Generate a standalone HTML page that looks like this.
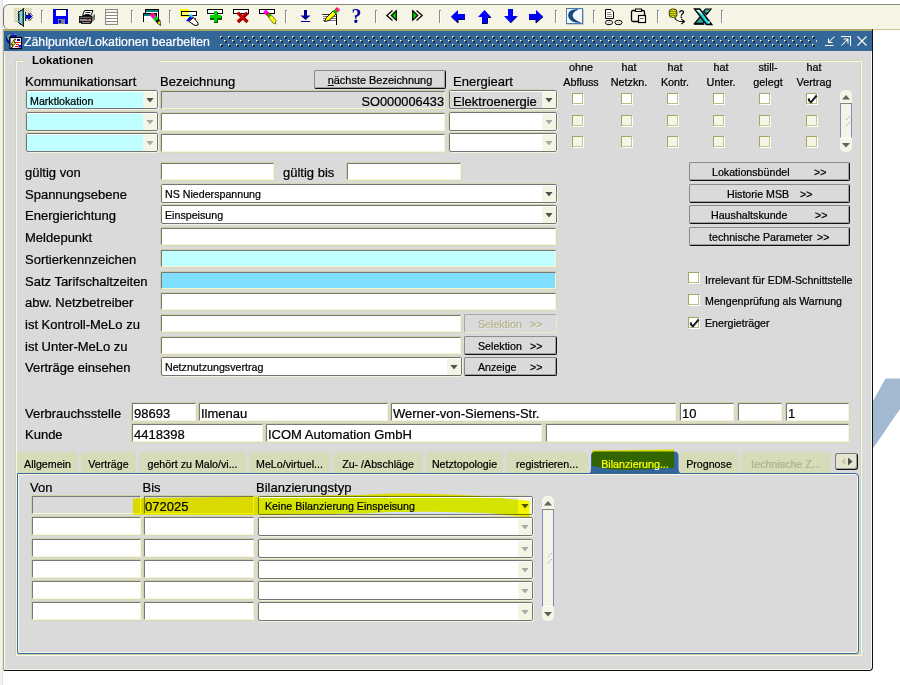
<!DOCTYPE html>
<html lang="de"><head><meta charset="utf-8"><title>Zählpunkte/Lokationen bearbeiten</title>
<style>
html,body{margin:0;padding:0;}
body{width:900px;height:685px;position:relative;overflow:hidden;background:#fff;font-family:"Liberation Sans",Arial,sans-serif;color:#000;-webkit-text-stroke:0.22px currentColor;}
.a{position:absolute;box-sizing:border-box;}
.l{position:absolute;white-space:nowrap;font-size:13px;line-height:16px;color:#000;}
.s{position:absolute;white-space:nowrap;font-size:10.67px;line-height:13px;color:#000;}
.f{position:absolute;box-sizing:border-box;border:1px solid;border-color:#cfcfa6 #dadab2 #dadab2 #cfcfa6;border-radius:2px;background:#fff;}
.f:before{content:"";position:absolute;left:0;top:0;right:0;bottom:0;border:1px solid;border-color:#787878 #f5f5de #f5f5de #787878;border-radius:1px;}
.f span{position:absolute;white-space:nowrap;}
.c{position:absolute;box-sizing:border-box;border:1px solid #747474;border-radius:2px;background:#fff;box-shadow:-1px -1px 0 #d6d6b2, 1px 1px 0 rgba(246,246,226,.85);}
.c:before{content:"";position:absolute;left:0;top:0;right:0;height:1px;background:#fff;z-index:2}
.c i{position:absolute;right:0;top:0;bottom:0;width:14px;background:#f5f5e6;border-radius:0 1px 1px 0;}
.c i:after{content:"";position:absolute;left:3px;top:50%;margin-top:-2px;width:8px;height:5px;background:#505050;clip-path:polygon(0 0,100% 0,50% 100%);}
.c.d i:after{background:#a8a8a8;}
.c span{position:absolute;white-space:nowrap;}
.b{position:absolute;box-sizing:border-box;border:1px solid;border-color:#8a8a8a #111 #111 #8a8a8a;border-radius:2px;background:#dadada;text-align:center;font-size:10.67px;white-space:pre;box-shadow:inset -1px -1px 0 rgba(0,0,0,.28);}
.b.d{border-color:#a8a8a0 #e9e9cc #e9e9cc #a8a8a0;color:#b4b492;box-shadow:none;text-shadow:1px 1px 0 #ecece0;}
.b span{position:absolute;top:0;}
.k{position:absolute;box-sizing:border-box;width:11px;height:11px;border:1px solid;border-color:#a5a568 #bcbc84 #bcbc84 #a5a568;background:#fff;box-shadow:1px 1px 0 #fff;}
.k.d{background:#f5f5e6;border-color:#a5a568 #c6c68e #c6c68e #a5a568;}
.t{position:absolute;box-sizing:border-box;top:452px;height:21px;background:#d6dbb8;border-radius:5px 5px 0 0;font-size:10.67px;line-height:25px;text-align:center;white-space:nowrap;}
</style></head>
<body>
<div class="a" style="left:0;top:0;width:3px;height:685px;background:#f1f1f1;border-right:1px solid #e3e3e3"></div>
<div class="a" style="left:3px;top:4px;width:897px;height:26px;background:#f6f5e5;border-top:1px solid #858580;border-left:1px solid #77776f;border-bottom:1px solid #c9c7a0;border-radius:6px 0 0 6px;"></div>
<svg class="a" style="left:0;top:0" width="900" height="30" viewBox="0 0 900 30">
<defs>
<pattern id="dth" width="2" height="2" patternUnits="userSpaceOnUse"><rect width="2" height="2" fill="#f6f5e5"/><rect width="1" height="1" fill="#c9c79a"/><rect x="1" y="1" width="1" height="1" fill="#c9c79a"/></pattern>
<g id="sep"><rect x="0" y="0" width="1" height="13" fill="#8c8c8c"/><rect x="1" y="0" width="1" height="1" fill="#8c8c8c"/><rect x="1" y="1" width="1" height="12" fill="#fff"/></g>
</defs>
<g shape-rendering="crispEdges">
<!-- exit -->
<rect x="14" y="8" width="18" height="13" fill="url(#dth)"/>
<polygon points="18.500,12 23.500,9 23.500,26 18.500,22.500" fill="#2f9292" stroke="#223" stroke-width="1"/>
<polygon points="19.500,12.500 21.500,11.300 21.500,23.800 19.500,22" fill="#7fd0d0"/>
<rect x="15" y="21" width="4" height="1" fill="#b9b48a"/>
<rect x="21" y="17" width="1" height="1" fill="#ff0"/>
<rect x="24" y="12" width="1" height="9" fill="#bff"/>
<rect x="25" y="12" width="1" height="9" fill="#334"/>
<polygon points="26,15 28.500,15 28.500,13 32.500,16.500 28.500,20 28.500,18 26,18" fill="#0000e0" stroke="#001060" stroke-width="0.6"/>
<!-- save -->
<rect x="53" y="9" width="15" height="15" fill="#0000ff"/>
<rect x="56" y="10" width="10" height="6" fill="#fff"/>
<rect x="57" y="9" width="11" height="1" fill="#000" opacity=".8"/>
<rect x="54" y="11" width="1" height="1" fill="#000"/>
<rect x="58" y="19" width="7" height="5" fill="#808080"/>
<rect x="59" y="20" width="2" height="3" fill="#0000ff"/>
<!-- print -->
</g>
<polygon points="82.500,15.500 84.500,10.500 93,10.500 91,15.500" fill="#fff" stroke="#000" stroke-width="1"/>
<path d="M85.500 12.500 H90.500 M84.700 14.500 H89.700" stroke="#222" stroke-width="1"/>
<polygon points="91.500,16.500 95,13.800 95,19.500 91.500,22.500" fill="#5c5c5c"/>
<path d="M92.500 16.500 L94.500 15 M92.500 19 L94.500 17.500 M92.500 21 L94.500 19.500" stroke="#cfcfcf" stroke-width=".6"/>
<g shape-rendering="crispEdges">
<rect x="79" y="16" width="13" height="7" fill="#1c1c1c"/>
<rect x="80" y="17" width="11" height="1" fill="#6a6a6a"/>
<rect x="80" y="19" width="11" height="2" fill="#8c8c8c"/>
<rect x="87" y="19" width="2" height="1" fill="#ff0000"/>
<rect x="81" y="23" width="10" height="1" fill="#1c1c1c"/>
<rect x="82" y="22" width="8" height="1" fill="#8a8a8a"/>
<!-- list disabled -->
<rect x="105.5" y="9.5" width="12" height="15" fill="#fff" stroke="#8a8a8a"/>
<rect x="106" y="12" width="11" height="1" fill="#8a8a8a"/><rect x="106" y="15" width="11" height="1" fill="#8a8a8a"/><rect x="106" y="18" width="11" height="1" fill="#8a8a8a"/><rect x="106" y="21" width="11" height="1" fill="#8a8a8a"/>
<rect x="106" y="10" width="11" height="2" fill="#f6f5e5"/><rect x="106" y="22" width="11" height="2" fill="#f6f5e5"/>
<!-- window+crayon -->
<rect x="145.500" y="9.5" width="13" height="9" fill="#fff" stroke="#000"/>
<rect x="146" y="10" width="12" height="2" fill="#008080"/>
<rect x="143.500" y="13.500" width="13" height="8" fill="#fff" stroke="#000"/>
<rect x="144" y="14" width="12" height="2" fill="#008080"/>
<rect x="143" y="21" width="14" height="1" fill="#f6f5e5"/>
<rect x="143" y="21" width="1" height="1" fill="#000"/>
</g>
<g>
<polygon points="149.500,15 152.500,12.500 156,16 153,19" fill="#ff00ff"/>
<polygon points="151,14.500 153.500,13 155,15 152.500,17" fill="#ff2020"/>
<polygon points="153,19 156,16 158.500,18.500 155.500,21.500" fill="#00cc00"/>
<polygon points="155.500,21.500 158.500,18.500 160,20 157,23" fill="#111"/>
<polygon points="157,23 160,20 160.500,25.500" fill="#ffff00" stroke="#000" stroke-width=".7"/>
</g>
<g shape-rendering="crispEdges">
<!-- flashlight -->
<rect x="180" y="9" width="9" height="8" fill="#ffff00"/>
<rect x="181.500" y="11.500" width="15" height="4" fill="#fff" stroke="#000"/>
<rect x="182" y="12" width="7" height="3" fill="#ffff66"/>
</g>
<polygon points="186,21 191,15 193.500,17.500 188.500,21.500" fill="#0000dd"/>
<polygon points="189,15.500 191,14 193.500,16.500 192,18" fill="#00ddff"/>
<polygon points="189,21.500 193.500,17.500 198,23 198,25 195,25.500" fill="#fff" stroke="#000" stroke-width="1"/>
<rect x="195" y="18" width="1" height="2" fill="#e00"/>
<g shape-rendering="crispEdges">
<!-- insert -->
<rect x="207.500" y="9.500" width="15" height="4" fill="#fff" stroke="#000"/>
<rect x="214" y="12" width="4" height="11" fill="#006000"/><rect x="210" y="16" width="12" height="4" fill="#006000"/>
<rect x="214" y="11" width="3" height="11" fill="#00d000"/><rect x="210" y="15" width="11" height="3" fill="#00d000"/>
<!-- delete -->
<rect x="233.500" y="9.500" width="15" height="4" fill="#fff" stroke="#000"/>
</g>
<path d="M238 13 L247.500 22 M247.500 13 L238 22" stroke="#700" stroke-width="3.200" fill="none"/>
<path d="M237.500 12.500 L247 21.500 M247 12.500 L237.500 21.500" stroke="#d00000" stroke-width="2.400" fill="none"/>
<!-- clear -->
<rect x="259.500" y="9.500" width="15" height="4" fill="#fff" stroke="#000" shape-rendering="crispEdges"/>
<polygon points="263,12 266,9.500 268.500,12 265.500,14.500" fill="#ff00ff"/>
<polygon points="265.500,14.500 268.500,12 270,13.500 267,16" fill="#e00"/>
<polygon points="267,16 270,13.500 271.500,15 268.500,17.500" fill="#00c000"/>
<polygon points="268.500,17.500 271.500,15 276,20.500 275.500,24 273,23" fill="#ffff00" stroke="#222" stroke-width=".6"/>
<!-- down arrow -->
<g fill="#000099" shape-rendering="crispEdges"><rect x="304" y="10" width="3" height="6"/><rect x="301" y="21" width="9" height="1.300"/></g>
<polygon points="300.500,15.500 310.500,15.500 305.500,20" fill="#000099"/>
<!-- edit -->
<rect x="322" y="14" width="15" height="10" fill="#fff"/>
<g fill="#333" shape-rendering="crispEdges"><rect x="322" y="14" width="14" height="1"/><rect x="323" y="16" width="13" height="1" fill="#777"/><rect x="323" y="18" width="13" height="1" fill="#777"/><rect x="323" y="20" width="13" height="1" fill="#777"/><rect x="336" y="14" width="1" height="11" fill="#000"/></g>
<polygon points="324.500,21.500 326,18 333,11 336,14 329,20.500" fill="#ffff00" stroke="#000" stroke-width=".9"/>
<polygon points="333,11 335,9 338,12 336,14" fill="#00c000"/>
<polygon points="334.800,9.200 337,7 340,10 337.800,12.200" fill="#ff2020"/>
<polygon points="337.300,9 338.800,7.800 340.300,10 339,11.300" fill="#ff40ff"/>
<!-- help -->
<text x="351.500" y="23.300" font-family="Liberation Serif,serif" font-weight="bold" font-size="20" fill="#000099" style="-webkit-text-stroke:0">?</text>
<!-- << >> -->
<path d="M392.500 10.500 L386.800 15.500 L392.500 20.500" fill="none" stroke="#000" stroke-width="1.200"/>
<polygon points="396.300,10.800 391.300,15.500 396.300,20.200" fill="#00dd00" stroke="#000" stroke-width="1.200"/>
<path d="M416.500 10.500 L422.200 15.500 L416.500 20.500" fill="none" stroke="#000" stroke-width="1.200"/>
<polygon points="412.700,10.800 417.700,15.500 412.700,20.200" fill="#00dd00" stroke="#000" stroke-width="1.200"/>
<!-- blue arrows -->
<polygon points="451,16.500 458,10 458,14 465,14 465,19 458,19 458,23" fill="#0000ff"/>
<path d="M451.500 17 L458 23 L458 19.500 L465 19.500" fill="none" stroke="#000050" stroke-width="1"/>
<polygon points="484.500,10 491,17 487,17 487,23.500 482,23.500 482,17 478,17" fill="#0000ff"/>
<path d="M491 17.500 L487.500 17.500 L487.500 23.500 L482 23.500" fill="none" stroke="#000050" stroke-width="1"/>
<polygon points="508,9 513,9 513,16 517.500,16 510.500,23 504,16 508,16" fill="#0000ff"/>
<path d="M517 16.500 L510.500 23 " fill="none" stroke="#000050" stroke-width="1"/>
<polygon points="529,14 536,14 536,10 543,16.500 536,23 536,19 529,19" fill="#0000ff"/>
<path d="M529 19.500 L536 19.500 L536 23 L543 16.800" fill="none" stroke="#000050" stroke-width="1"/>
<!-- moon -->
<rect x="567" y="9" width="17" height="16" fill="#c8c8c8"/>
<rect x="566.500" y="8.500" width="16" height="15" fill="#f4f8fc" stroke="#4a7ab0" stroke-width="1"/>
<path d="M579 9.500 C571 12 569.500 19 581.500 22.500 C572 24.500 565 17 569.500 11.500 C572 9 576 8.800 579 9.500 Z" fill="#174a7c"/>
<!-- doc+glasses -->
<polygon points="605.500,9.500 611,9.500 613.500,12 613.500,18.500 605.500,18.500" fill="#fff" stroke="#000"/>
<g fill="#888" shape-rendering="crispEdges"><rect x="607" y="12" width="4" height="1"/><rect x="607" y="14" width="5" height="1"/><rect x="607" y="16" width="5" height="1"/></g>
<ellipse cx="609" cy="22.500" rx="3.600" ry="2.200" fill="none" stroke="#000"/><ellipse cx="609" cy="22.500" rx="1.200" ry=".6" fill="#999"/>
<ellipse cx="618.500" cy="22.500" rx="3.600" ry="2.200" fill="none" stroke="#000"/><ellipse cx="618.500" cy="22.500" rx="1.200" ry=".6" fill="#999"/>
<!-- clipboard -->
<rect x="631.500" y="10.500" width="13" height="11" rx="1.500" fill="#f6f5e5" stroke="#000" stroke-width="1.300"/>
<rect x="635.500" y="9" width="6" height="2.500" fill="#f6f5e5" stroke="#000"/>
<rect x="638.500" y="15.500" width="7" height="7" fill="#fff" stroke="#000" stroke-width="1.200"/>
<rect x="640" y="18" width="4" height="1" fill="#777"/>
<!-- db query -->
<rect x="669.300" y="9" width="7.600" height="8.400" rx="3.500" ry="2.200" fill="#ffff00" stroke="#111" stroke-width=".9"/>
<path d="M669.800 11.200 H676.500 M669.800 13.200 H676.500 M669.800 15.200 H676.500" stroke="#3a3a00" stroke-width=".8"/>
<text x="678.600" y="17.500" font-family="Liberation Sans,sans-serif" font-weight="bold" font-size="10" fill="#000" style="-webkit-text-stroke:0">?</text>
<path d="M674.800 17.500 C675.500 20.800 678.500 21.800 684 21.500 M681.300 18.800 L684.500 21.500 L681.300 24.200" fill="none" stroke="#000" stroke-width="1.100"/>
<!-- excel -->
<path d="M700.500 16.500 L704 21 L703 23.500 L694.500 23.500 Z" fill="#2aa5a5" stroke="#000" stroke-width="1.300"/>
<rect x="694" y="23.500" width="10.500" height="1.300" fill="#000"/>
<path d="M705.500 9 L711 9 L706.500 14.500 L703.500 11.500 Z" fill="#2aa5a5" stroke="#000" stroke-width="1.200"/>
<path d="M707 12 L709.500 9.800" stroke="#6c6" stroke-width="1"/>
<path d="M694.500 9 L699.800 9 L711.800 24.500 L706.500 24.500 Z" fill="#19d9d9" stroke="#000" stroke-width="1.400"/>
<path d="M696 9.900 L699.300 9.900 L703.500 15.300 Z" fill="#fff"/>
<rect x="708.300" y="21.300" width="1.500" height="1.500" fill="#fff"/>
<!-- separators -->
<use href="#sep" x="41" y="10"/><use href="#sep" x="131" y="10"/><use href="#sep" x="169" y="10"/><use href="#sep" x="285" y="10"/><use href="#sep" x="375" y="10"/><use href="#sep" x="439" y="10"/><use href="#sep" x="555" y="10"/><use href="#sep" x="593" y="10"/><use href="#sep" x="657" y="10"/><use href="#sep" x="721" y="10"/>
</svg>

<div class="a" style="left:3px;top:29px;width:870px;height:642px;background:#dadada;border:1px solid;border-color:#a5a567 #111 #111 #a9a976;border-radius:0 0 4px 2px;box-shadow:inset -1px -1px 0 #f7f7e2"></div>
<div class="a" style="left:4px;top:29px;width:868px;height:2px;background:#a5a567;border-radius:2px 0 0 0"></div>
<div class="a" style="left:4px;top:51px;width:1px;height:618px;background:#f7f7e2"></div>
<div class="a" style="left:4px;top:31px;width:868px;height:20px;background:#336699"></div>
<svg class="a" style="left:0;top:31px" width="900" height="20" viewBox="0 31 900 20">
<defs><pattern id="dots" x="220" y="36" width="8" height="8" patternUnits="userSpaceOnUse">
<rect x="0" y="0" width="1.700" height="1.700" fill="#f0f0b4"/><rect x="1" y="1" width="1.600" height="1.600" fill="#000"/>
<rect x="4" y="4" width="1.700" height="1.700" fill="#f0f0b4"/><rect x="5" y="5" width="1.600" height="1.600" fill="#000"/>
</pattern></defs>
<rect x="219" y="36" width="598" height="11" fill="url(#dots)"/>
<g stroke="#fdfdf4" stroke-width="1.050" fill="none">
<path d="M825 45.500 H833.500 M834.500 36.500 L829 42 M828.500 38.500 V42.500 H832.500"/>
<path d="M841 36.500 H850.500 V46 M841.500 45.500 L847.500 39.500 M843.500 39 H848 V43.500"/>
<path d="M857.500 36.500 L866.500 45.500 M866.500 36.500 L857.500 45.500" stroke-width="1.150"/>
</g>
<!-- app icon -->
<circle cx="11.500" cy="38.500" r="5.500" fill="#0a0aa8"/>
<path d="M7 36 C8 34 10 33.500 11 34.500 C10 36.500 9 38 9.500 41 C8 40 6.800 38.500 7 36Z" fill="#5fae6f"/>
<path d="M11 33.500 L13 35.500 M14 33.500 L15.500 35" stroke="#b8b8ff" stroke-width="1"/>
<rect x="10" y="37.500" width="11.500" height="11" fill="#fff" stroke="#000" stroke-width="1.200"/>
<polygon points="14.500,39 11,44.500 13,44.500 11.500,48 16,42.500 14,42.500 15.500,39" fill="#ffff00" stroke="#000" stroke-width=".7"/>
<rect x="17" y="39" width="3" height="2" fill="#0000cc"/>
<rect x="16" y="42" width="4.500" height="1" fill="#e00"/><rect x="16" y="44" width="3" height="1" fill="#e00"/><rect x="15" y="46" width="3" height="1" fill="#e00"/>
<rect x="18.500" y="45" width="2.500" height="2.500" fill="#0000cc"/>
</svg>

<div class="l" style="left:24px;top:34px;color:#fff;font-size:12.3px;line-height:16px">Zählpunkte/Lokationen bearbeiten</div>
<div class="a" style="left:15px;top:60px;width:847px;height:596px;border:1px solid;border-color:#d2d2b4 #f7f7e2 #f7f7e2 #d2d2b4;box-shadow:inset 1px 1px 0 #f7f7e2, inset -1px -1px 0 #d2d2b4"></div>
<div class="a" style="left:25px;top:54px;width:135px;height:14px;background:#dadada"></div>
<div class="l" style="left:32px;top:53px;font-weight:bold;font-size:11.5px;line-height:14px;-webkit-text-stroke:0">Lokationen</div>
<div class="l" style="left:25px;top:74px;">Kommunikationsart</div>
<div class="l" style="left:160px;top:74px;">Bezeichnung</div>
<div class="l" style="left:453px;top:74px;">Energieart</div>
<div class="b" style="left:314px;top:70px;width:132px;height:19px;line-height:18px;line-height:18px;font-size:10.95px"><u>n</u>ächste Bezeichnung</div>
<div class="s" style="left:551px;top:60px;width:60px;text-align:center;line-height:15px;font-size:10.8px">ohne<br>Abfluss</div>
<div class="s" style="left:599px;top:60px;width:60px;text-align:center;line-height:15px;font-size:10.8px">hat<br>Netzkn.</div>
<div class="s" style="left:645px;top:60px;width:60px;text-align:center;line-height:15px;font-size:10.8px">hat<br>Kontr.</div>
<div class="s" style="left:691px;top:60px;width:60px;text-align:center;line-height:15px;font-size:10.8px">hat<br>Unter.</div>
<div class="s" style="left:738px;top:60px;width:60px;text-align:center;line-height:15px;font-size:10.8px">still-<br>gelegt</div>
<div class="s" style="left:784px;top:60px;width:60px;text-align:center;line-height:15px;font-size:10.8px">hat<br>Vertrag</div>
<div class="c" style="left:26px;top:90px;width:132px;height:19px;background:#bfffff;"><span style="left:3px;top:1px;line-height:19px;font-size:10.67px">Marktlokation</span><i></i></div>
<div class="f" style="left:160px;top:90px;width:286px;height:20px;background:#dadada;"><span style="right:1px;top:1px;line-height:20px;font-size:12.8px">SO000006433</span></div>
<div class="c" style="left:449px;top:90px;width:108px;height:19px;background:#dadada;"><span style="left:3px;top:1px;line-height:19px;font-size:13px">Elektroenergie</span><i></i></div>
<div class="k" style="left:572px;top:93px"></div>
<div class="k" style="left:621px;top:93px"></div>
<div class="k" style="left:667px;top:93px"></div>
<div class="k" style="left:713px;top:93px"></div>
<div class="k" style="left:759px;top:93px"></div>
<div class="k" style="left:806px;top:93px"><svg width="12" height="12" viewBox="0 0 12 12" style="position:absolute;left:-1px;top:-1px"><path d="M2.800 5.300 L3 7.600 L4.900 9.300 L10.700 2.500" fill="none" stroke="#1c1c1c" stroke-width="2" stroke-linejoin="miter"/></svg></div>
<div class="c d" style="left:26px;top:112px;width:132px;height:19px;background:#bfffff;"><i></i></div>
<div class="f" style="left:160px;top:112px;width:286px;height:20px;"></div>
<div class="c d" style="left:449px;top:112px;width:108px;height:19px;"><i></i></div>
<div class="k d" style="left:572px;top:115px"></div>
<div class="k d" style="left:621px;top:115px"></div>
<div class="k d" style="left:667px;top:115px"></div>
<div class="k d" style="left:713px;top:115px"></div>
<div class="k d" style="left:759px;top:115px"></div>
<div class="k d" style="left:806px;top:115px"></div>
<div class="c d" style="left:26px;top:133px;width:132px;height:19px;background:#bfffff;"><i></i></div>
<div class="f" style="left:160px;top:133px;width:286px;height:20px;"></div>
<div class="c d" style="left:449px;top:133px;width:108px;height:19px;"><i></i></div>
<div class="k d" style="left:572px;top:136px"></div>
<div class="k d" style="left:621px;top:136px"></div>
<div class="k d" style="left:667px;top:136px"></div>
<div class="k d" style="left:713px;top:136px"></div>
<div class="k d" style="left:759px;top:136px"></div>
<div class="k d" style="left:806px;top:136px"></div>
<div class="a" style="left:840px;top:90px;width:12px;height:62px;background:#f5f5e6;border-radius:5px"></div>
<div class="a" style="left:840px;top:103px;width:12px;height:35px;background:#f5f5e6;border-left:1px solid #8585c8;border-right:1px solid #8585c8;border-top:1px solid #85857a;border-bottom:1px solid #fff"></div>
<svg class="a" style="left:845px;top:114.5px" width="6" height="12"><path d="M1 5 L5 1 M1 11 L5 7" stroke="#a9a98c" stroke-width="1" stroke-dasharray="2 1.500" fill="none"/></svg>
<div class="a" style="left:842px;top:95px;width:8px;height:4.5px;background:#606060;clip-path:polygon(0 100%,100% 100%,50% 0)"></div>
<div class="a" style="left:842px;top:143px;width:8px;height:4.5px;background:#606060;clip-path:polygon(0 0,100% 0,50% 100%)"></div>
<div class="l" style="left:25px;top:165px;">gültig von</div>
<div class="l" style="left:25px;top:187px;">Spannungsebene</div>
<div class="l" style="left:25px;top:208px;">Energierichtung</div>
<div class="l" style="left:25px;top:230px;">Meldepunkt</div>
<div class="l" style="left:25px;top:252px;">Sortierkennzeichen</div>
<div class="l" style="left:25px;top:274px;">Satz Tarifschaltzeiten</div>
<div class="l" style="left:25px;top:295px;">abw. Netzbetreiber</div>
<div class="l" style="left:25px;top:317px;">ist Kontroll-MeLo zu</div>
<div class="l" style="left:25px;top:339px;">ist Unter-MeLo zu</div>
<div class="l" style="left:25px;top:360px;">Verträge einsehen</div>
<div class="f" style="left:160px;top:162px;width:115px;height:19px;"></div>
<div class="l" style="left:283px;top:165px;">gültig bis</div>
<div class="f" style="left:346px;top:162px;width:116px;height:19px;"></div>
<div class="c" style="left:161px;top:184px;width:396px;height:19px;"><span style="left:3px;top:0px;line-height:19px;font-size:10.67px">NS Niederspannung</span><i></i></div>
<div class="c" style="left:161px;top:205px;width:396px;height:19px;"><span style="left:3px;top:0px;line-height:19px;font-size:10.67px">Einspeisung</span><i></i></div>
<div class="f" style="left:160px;top:227px;width:397px;height:19px;"></div>
<div class="f" style="left:160px;top:249px;width:397px;height:19px;background:#bfffff;"></div>
<div class="f" style="left:160px;top:271px;width:397px;height:19px;background:#80dfff;"></div>
<div class="f" style="left:160px;top:292px;width:397px;height:19px;"></div>
<div class="f" style="left:160px;top:314px;width:302px;height:19px;"></div>
<div class="f" style="left:160px;top:336px;width:302px;height:19px;"></div>
<div class="c" style="left:161px;top:357px;width:301px;height:19px;"><span style="left:3px;top:0px;line-height:19px;font-size:10.67px">Netznutzungsvertrag</span><i></i></div>
<div class="b d" style="left:464px;top:314px;width:93px;height:19px;line-height:18px;"><span style="left:13px">Selektion</span><span style="left:65px">&gt;&gt;</span></div>
<div class="b" style="left:464px;top:336px;width:93px;height:19px;line-height:18px;"><span style="left:13px">Selektion</span><span style="left:65px">&gt;&gt;</span></div>
<div class="b" style="left:464px;top:357px;width:93px;height:19px;line-height:18px;"><span style="left:13px">Anzeige</span><span style="left:65px">&gt;&gt;</span></div>
<div class="b" style="left:689px;top:162px;width:161px;height:19px;line-height:18px;"><span style="left:22px">Lokationsbündel</span><span style="left:124px">&gt;&gt;</span></div>
<div class="b" style="left:689px;top:184px;width:161px;height:19px;line-height:18px;"><span style="left:37px">Historie MSB</span><span style="left:110px">&gt;&gt;</span></div>
<div class="b" style="left:689px;top:205px;width:161px;height:19px;line-height:18px;"><span style="left:21px">Haushaltskunde</span><span style="left:125px">&gt;&gt;</span></div>
<div class="b" style="left:689px;top:227px;width:161px;height:19px;line-height:18px;"><span style="left:19px">technische Parameter</span><span style="left:127px">&gt;&gt;</span></div>
<div class="k" style="left:688px;top:272px"></div>
<div class="k" style="left:688px;top:294px"></div>
<div class="k" style="left:688px;top:317px"><svg width="12" height="12" viewBox="0 0 12 12" style="position:absolute;left:-1px;top:-1px"><path d="M2.800 5.300 L3 7.600 L4.900 9.300 L10.700 2.500" fill="none" stroke="#1c1c1c" stroke-width="2" stroke-linejoin="miter"/></svg></div>
<div class="s" style="left:705px;top:274px;">Irrelevant für EDM-Schnittstelle</div>
<div class="s" style="left:705px;top:295px;">Mengenprüfung als Warnung</div>
<div class="s" style="left:705px;top:317px;">Energieträger</div>
<div class="l" style="left:25px;top:406px;">Verbrauchsstelle</div>
<div class="l" style="left:25px;top:427px;">Kunde</div>
<div class="f" style="left:131px;top:402px;width:66px;height:20px;"><span style="left:2px;top:1px;line-height:20px;font-size:13px">98693</span></div>
<div class="f" style="left:198px;top:402px;width:191px;height:20px;"><span style="left:2px;top:1px;line-height:20px;font-size:13px">Ilmenau</span></div>
<div class="f" style="left:390px;top:402px;width:287px;height:20px;"><span style="left:2px;top:1px;line-height:20px;font-size:13px">Werner-von-Siemens-Str.</span></div>
<div class="f" style="left:679px;top:402px;width:56px;height:20px;"><span style="left:2px;top:1px;line-height:20px;font-size:13px">10</span></div>
<div class="f" style="left:737px;top:402px;width:46px;height:20px;"></div>
<div class="f" style="left:785px;top:402px;width:65px;height:20px;"><span style="left:2px;top:1px;line-height:20px;font-size:13px">1</span></div>
<div class="f" style="left:131px;top:423px;width:133px;height:20px;"><span style="left:2px;top:1px;line-height:20px;font-size:13px">4418398</span></div>
<div class="f" style="left:265px;top:423px;width:278px;height:20px;"><span style="left:2px;top:1px;line-height:20px;font-size:13px">ICOM Automation GmbH</span></div>
<div class="f" style="left:545px;top:423px;width:305px;height:20px;"></div>
<div class="t" style="left:17px;width:61px;">Allgemein</div>
<div class="t" style="left:81px;width:55px;">Verträge</div>
<div class="t" style="left:139px;width:107px;">gehört zu Malo/vi...</div>
<div class="t" style="left:249px;width:81px;">MeLo/virtuel...</div>
<div class="t" style="left:333px;width:90px;">Zu- /Abschläge</div>
<div class="t" style="left:426px;width:77px;">Netztopologie</div>
<div class="t" style="left:506px;width:82px;">registrieren...</div>
<div class="t" style="left:680px;width:58px;">Prognose</div>
<div class="t" style="left:741px;width:90px;color:#aeb092;">technische Z...</div>
<div class="a" style="left:835px;top:453px;width:23px;height:17px;background:#e6e6d0;border:1px solid;border-color:#7c7c7c #111 #111 #7c7c7c;border-radius:3px;box-shadow:inset -1px -1px 0 rgba(0,0,0,.3)"></div>
<div class="a" style="left:841px;top:457.500px;width:4.500px;height:8px;background:#c6cbad;clip-path:polygon(100% 0,100% 100%,0 50%)"></div>
<div class="a" style="left:848px;top:457.500px;width:4.500px;height:8px;background:#4c4c4c;clip-path:polygon(0 0,0 100%,100% 50%)"></div>
<div class="a" style="left:17px;top:473px;width:842px;height:181px;background:#dadada;border:1px solid #336699;border-radius:0 4px 3px 2px;box-shadow:inset 1px 1px 0 #fbfbe8, inset -1px -1px 0 #fbfbe8"></div>
<svg class="a" style="left:586px;top:450px" width="98" height="25"><path d="M2 24 C5 23 5 20 5 18 V6 Q5 1.500 9.500 1.500 H88 Q92.500 1.500 92.500 6 V18 C92.500 20 93 23 96 24 Z" fill="#336699"/></svg>
<div class="s" style="left:591px;top:457px;width:88px;text-align:center;color:#fff;line-height:14px">Bilanzierung...</div>
<svg class="a" style="left:586px;top:446px;mix-blend-mode:multiply" width="98" height="30"><path d="M6 4.500 L50 4 L88 3.600 L88 22 L72 22.500 C50 24.500 40 24 26 23.500 L6 20 Z" fill="#ffff00"/></svg>
<div class="l" style="left:30px;top:480px;">Von</div>
<div class="l" style="left:142.5px;top:480px;">Bis</div>
<div class="l" style="left:256px;top:480px;">Bilanzierungstyp</div>
<div class="f" style="left:31px;top:495px;width:111px;height:20px;background:#dadada;"></div>
<div class="f" style="left:143px;top:495px;width:112px;height:20px;background:#dadada;"><span style="left:1px;top:1px;line-height:20px;font-size:13px">072025</span></div>
<div class="c" style="left:258px;top:496px;width:275px;height:19px;background:#d4e4ff;"><span style="left:6px;top:0px;line-height:19px;font-size:10.67px">Keine Bilanzierung Einspeisung</span><i></i></div>
<div class="f" style="left:31px;top:516px;width:111px;height:20px;"></div>
<div class="f" style="left:143px;top:516px;width:112px;height:20px;"></div>
<div class="c d" style="left:258px;top:517px;width:275px;height:19px;"><i></i></div>
<div class="f" style="left:31px;top:538px;width:111px;height:20px;"></div>
<div class="f" style="left:143px;top:538px;width:112px;height:20px;"></div>
<div class="c d" style="left:258px;top:539px;width:275px;height:19px;"><i></i></div>
<div class="f" style="left:31px;top:559px;width:111px;height:20px;"></div>
<div class="f" style="left:143px;top:559px;width:112px;height:20px;"></div>
<div class="c d" style="left:258px;top:560px;width:275px;height:19px;"><i></i></div>
<div class="f" style="left:31px;top:580px;width:111px;height:20px;"></div>
<div class="f" style="left:143px;top:580px;width:112px;height:20px;"></div>
<div class="c d" style="left:258px;top:581px;width:275px;height:19px;"><i></i></div>
<div class="f" style="left:31px;top:601px;width:111px;height:20px;"></div>
<div class="f" style="left:143px;top:601px;width:112px;height:20px;"></div>
<div class="c d" style="left:258px;top:602px;width:275px;height:19px;"><i></i></div>
<div class="a" style="left:542px;top:496px;width:12px;height:125px;background:#f5f5e6;border-radius:5px"></div>
<div class="a" style="left:542px;top:509px;width:12px;height:98px;background:#f5f5e6;border-left:1px solid #8585c8;border-right:1px solid #8585c8;border-top:1px solid #85857a;border-bottom:1px solid #fff"></div>
<svg class="a" style="left:547px;top:552.0px" width="6" height="12"><path d="M1 5 L5 1 M1 11 L5 7" stroke="#a9a98c" stroke-width="1" stroke-dasharray="2 1.500" fill="none"/></svg>
<div class="a" style="left:544px;top:501px;width:8px;height:4.5px;background:#606060;clip-path:polygon(0 100%,100% 100%,50% 0)"></div>
<div class="a" style="left:544px;top:612px;width:8px;height:4.5px;background:#606060;clip-path:polygon(0 0,100% 0,50% 100%)"></div>
<svg class="a" style="left:0;top:485px;mix-blend-mode:multiply" width="600" height="40" viewBox="0 485 600 40"><path d="M133 498.500 L160 498 L258 496.500 L357 495 C375 494.300 388 493.500 399 493.500 C420 493.500 445 494.200 463 495 L490 497 L529.500 501 L529.500 517.600 L505 515 L490 513.200 C470 512.300 440 511.700 410 511.700 C390 512 375 513 357 513.600 L300 514.500 L258 515 L133 514.700 Z" fill="#ffff00"/></svg>
<svg class="a" style="left:873px;top:370px" width="27" height="90"><polygon points="12.500,8.500 27,8.500 27,39 0,78.500 0,31" fill="#a3b9d0"/></svg>
</body></html>
